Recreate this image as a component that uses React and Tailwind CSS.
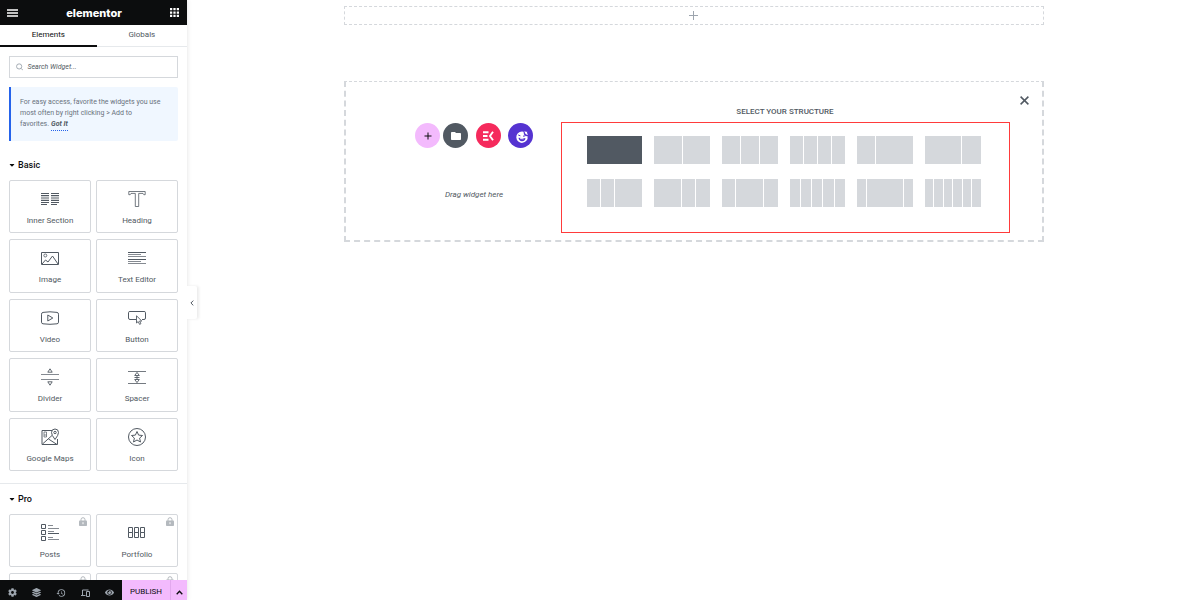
import { useState } from 'react';
import { FaCog, FaCaretDown, FaEye, FaLayerGroup } from 'react-icons/fa';
import { MdAdd, MdFolder, MdHistory } from 'react-icons/md';

const icons = {
  innerSection: (
    <>
      <path d="M0 3.5h8M10 3.5h8M0 5.5h8M10 5.5h8M0 10.5h8M10 10.5h8M0 12.5h8M10 12.5h8M0 14.5h6M10 14.5h6" />
      <path d="M0 8h8M10 8h8" strokeWidth="3" opacity=".5" />
    </>
  ),
  heading: <path d="M.8 1.500h16.400v3.200h-1.400L15 3.400h-4.300v13.100H7.300V3.400H3L2.200 4.700H.8z" strokeWidth=".8" />,
  image: (
    <>
      <path d="M.5 3.500h17v12H.5z" />
      <circle cx="4.300" cy="6.500" r="1.500" strokeWidth=".8" />
      <path d="M1 15l3.500-4 2.500 2 4.500-6 5.500 8" />
    </>
  ),
  textEditor: (
    <>
      <path d="M0 3.500h18M0 10.500h18" />
      <path d="M0 5.500h13M0 7.500h18M0 12.500h13M0 14.500h18" opacity=".7" />
    </>
  ),
  video: (
    <>
      <path d="M2 3.4Q9 2.2 16 3.4q1.5.2 1.5 1.8v8q0 1.4-1.5 1.6-7 1-14 0Q.5 14.6.5 13.2v-8Q.5 3.6 2 3.400z" />
      <path d="M6.800 6v6l5-3z" />
    </>
  ),
  button: (
    <>
      <path d="M8 10.5H2Q.5 10.5.5 9V3.500Q.5 2.500 2 2.500h14q1.500 0 1.500 1V9q0 1.500-1.500 1.500h-2" />
      <path d="M8.500 6.800V14l1.700-1.400 1.400 2.800 1.300-.7-1.300-2.700h2.200z" strokeWidth=".9" />
    </>
  ),
  divider: (
    <>
      <path d="M0 6.500h18M0 11.500h18" opacity=".7" />
      <path d="M9 .8l2.200 3.400H6.800zM9 17.200l2.200-3.400H6.800z" strokeWidth=".9" />
    </>
  ),
  spacer: (
    <>
      <path d="M0 3.500h18M0 15.500h18" opacity=".8" />
      <path d="M9 4.400l2.300 3.100H6.700zM9 14.600l2.300-3.100H6.700zM9 7.500v4M6.500 9.500h5" strokeWidth=".9" />
    </>
  ),
  maps: (
    <>
      <path d="M11 2.500H1v14h15.500V11M1.500 16L11 7.500M7.500 11l8.500 5.500" />
      <path d="M14 11.500q-3.500-4.500-3.500-7a3.500 3.500 0 0 1 7 0q0 2.500-3.500 7z" />
      <circle cx="14" cy="4.500" r="1.200" />
      <path d="M3 4h2.500v3H3zM3 7v2h2.500V7" strokeWidth=".7" />
    </>
  ),
  icon: (
    <>
      <circle cx="9" cy="9" r="8.500" />
      <path d="M9 3.500l1.600 3.600 3.900.4-2.900 2.600.9 3.900L9 12l-3.500 2 .9-3.900-2.900-2.600 3.900-.4z" />
    </>
  ),
  posts: (
    <>
      <path d="M.5 .5h4v4h-4zM.5 6.500h4v4h-4zM.5 12.500h4v4h-4zM7 9.500h11" />
      <path d="M7 1.500h5M7 4.500h11M7 7.500h6M7 13.500h5M7 15.500h11" opacity=".7" />
    </>
  ),
  portfolio: <path d="M.5 3.500h4v5h-4zM6.500 3.500h4v5h-4zM12.500 3.500h4v5h-4zM.5 8.500h4v5h-4zM6.500 8.500h4v5h-4zM12.500 8.500h4v5h-4z" />,
};

const basicWidgets = [
  { name: 'Inner Section', icon: 'innerSection' },
  { name: 'Heading', icon: 'heading' },
  { name: 'Image', icon: 'image' },
  { name: 'Text Editor', icon: 'textEditor' },
  { name: 'Video', icon: 'video' },
  { name: 'Button', icon: 'button' },
  { name: 'Divider', icon: 'divider' },
  { name: 'Spacer', icon: 'spacer' },
  { name: 'Google Maps', icon: 'maps' },
  { name: 'Icon', icon: 'icon' },
];

const proWidgets = [
  { name: 'Posts', icon: 'posts' },
  { name: 'Portfolio', icon: 'portfolio' },
];

const structures = [
  [100],
  [50, 50],
  [33, 33, 33],
  [25, 25, 25, 25],
  [33, 66],
  [66, 33],
  [25, 25, 50],
  [50, 25, 25],
  [25, 50, 25],
  [20, 20, 20, 20, 20],
  [16, 66, 16],
  [16, 16, 16, 16, 16, 16],
];

function LockIcon() {
  return (
    <svg viewBox="0 0 8 9" className="absolute top-[2px] right-[3px] h-[9px] w-[8px]" fill="none">
      <path d="M2 4V2.700a2 2 0 0 1 4 0V4" stroke="#b4b9be" />
      <rect y="3.500" width="8" height="5.500" rx=".8" fill="#b4b9be" />
      <path d="M4 5.200v2" stroke="#fff" />
    </svg>
  );
}

function WidgetCard({ name, icon, locked }) {
  return (
    <button className="relative flex min-h-[53px] flex-col items-center rounded-[2px] border border-[#d5d8dc] pt-[9px] text-[#515962]">
      {locked && <LockIcon />}
      {icon && (
        <svg viewBox="0 0 18 18" className="h-[18px] w-[18px]" fill="none" stroke="currentColor">
          {icons[icon]}
        </svg>
      )}
      <span className="mt-[7px] text-[8px] leading-[11px]">{name}</span>
    </button>
  );
}

function CategoryTitle({ children }) {
  return (
    <h2 className="flex items-center gap-[3px] text-[9px] leading-[12px] font-medium text-[#0c0d0e]">
      <FaCaretDown className="h-[8px] w-[6px]" />
      {children}
    </h2>
  );
}

function Sidebar() {
  const [tab, setTab] = useState('Elements');
  const [search, setSearch] = useState('');

  return (
    <aside className="relative z-10 flex w-[187px] shrink-0 flex-col bg-white shadow-[0_0_5px_rgba(0,0,0,0.12)]">
      <header className="flex h-[25px] shrink-0 items-center justify-between bg-[#0c0d0e] pr-[8px] pl-[7px] text-white">
        <button aria-label="Menu">
          <svg viewBox="0 0 11 8" className="h-[8px] w-[11px]" stroke="currentColor">
            <path d="M0 1h11M0 4h11M0 7h11" strokeWidth="1.400" />
          </svg>
        </button>
        <span className="font-['Inter',sans-serif] text-[11px] leading-[14px] font-extrabold">elementor</span>
        <button aria-label="Widgets">
          <svg viewBox="0 0 8 8" className="h-[9px] w-[9px]" fill="currentColor">
            <path d="M0 0h2v2H0zM3 0h2v2H3zM6 0h2v2H6zM0 3h2v2H0zM3 3h2v2H3zM6 3h2v2H6zM0 6h2v2H0zM3 6h2v2H3zM6 6h2v2H6z" />
          </svg>
        </button>
      </header>

      <nav className="flex h-[22px] shrink-0 border-b border-[#e6e9ec] text-[8px] text-[#515962]">
        {['Elements', 'Globals'].map((name) => (
          <button
            key={name}
            onClick={() => setTab(name)}
            className={`-mb-px grow border-b-2 pb-[1px] ${tab === name ? 'border-[#0c0d0e] text-[#0c0d0e]' : 'border-transparent'}`}
          >
            {name}
          </button>
        ))}
      </nav>

      <div className="min-h-0 flex-1 overflow-hidden">
        <div className="px-[9px] pt-[9px]">
          <label className="flex h-[22px] items-center gap-[4px] border border-[#d5d8dc] px-[6px] text-[#9da5ae]">
            <svg viewBox="0 0 8 8" className="h-[8px] w-[8px]" fill="none" stroke="currentColor">
              <circle cx="3.400" cy="3.400" r="2.800" />
              <path d="M5.400 5.400L7.700 7.700" />
            </svg>
            <input
              type="text"
              aria-label="Search Widget"
              placeholder="Search Widget..."
              value={search}
              onChange={(e) => setSearch(e.target.value)}
              className="w-full min-w-0 text-[7px] italic outline-none placeholder:text-[#515962]"
            />
          </label>

          <p className="mt-[9px] rounded-r-[2px] border-l-2 border-[#2563eb] bg-[#f0f7ff] pt-[10px] pr-[16px] pb-[10px] pl-[9px] text-[7px] leading-[11px] text-[#69727d]">
            For easy access, favorite the widgets you use most often by right clicking &gt; Add to favorites.
            <a href="#" className="ml-[2px] inline-block border-b border-dotted border-[#2563eb] font-bold text-[#515962] italic">Got It</a>
          </p>
        </div>

        <section className="px-[9px] pt-[18px] pb-[12px]">
          <CategoryTitle>Basic</CategoryTitle>
          <div className="mt-[9px] grid min-h-[291px] grid-cols-2 gap-x-[5px] gap-y-[6px]">
            {basicWidgets.map((w) => (
              <WidgetCard key={w.name} {...w} />
            ))}
          </div>
        </section>

        <section className="border-t border-[#e6e9ec] px-[9px] pt-[9px]">
          <CategoryTitle>Pro</CategoryTitle>
          <div className="mt-[9px] grid grid-cols-2 gap-x-[5px] gap-y-[6px]">
            {proWidgets.map((w) => (
              <WidgetCard key={w.name} {...w} locked />
            ))}
            <WidgetCard locked />
            <WidgetCard locked />
          </div>
        </section>
      </div>

      <footer className="flex h-[20px] shrink-0 bg-[#0c0d0e] text-[#9da5ae]">
        <div className="flex flex-1 items-center justify-around pt-[5px]">
          <button aria-label="Settings"><FaCog className="h-[9px] w-[9px]" /></button>
          <button aria-label="Navigator"><FaLayerGroup className="h-[9px] w-[9px]" /></button>
          <button aria-label="History"><MdHistory className="h-[10px] w-[10px]" /></button>
          <button aria-label="Responsive mode">
            <svg viewBox="0 0 9 8" className="h-[8px] w-[9px]" fill="none" stroke="currentColor">
              <path d="M7.500 1H1.500v5.500M0 6.500h4.500M5.500 2.500h3v5h-3z" />
            </svg>
          </button>
          <button aria-label="Preview"><FaEye className="h-[9px] w-[9px]" /></button>
        </div>
        <button className="w-[48px] bg-[#f3bafd] pt-[4px] text-[8px] leading-[16px] text-[#0c0d0e]">PUBLISH</button>
        <button aria-label="Save options" className="flex w-[17px] items-center justify-center border-l border-[#e2a8ee] bg-[#f3bafd] pt-[4px] text-[#0c0d0e]">
          <svg viewBox="0 0 7 5" className="h-[5px] w-[7px]" fill="none" stroke="currentColor">
            <path d="M.7 4.200L3.500 1.200l2.800 3" strokeWidth="1.300" />
          </svg>
        </button>
      </footer>

      <button
        aria-label="Hide panel"
        className="absolute top-[286px] left-full flex h-[33px] w-[10px] items-center justify-center rounded-r-[2px] bg-white text-[#515962] shadow-[2px_0_3px_rgba(0,0,0,0.08)]"
      >
        <svg viewBox="0 0 4 6" className="h-[6px] w-[4px]" fill="none" stroke="currentColor">
          <path d="M3.300.6L.9 3l2.400 2.400" />
        </svg>
      </button>
    </aside>
  );
}

function Structure({ columns, active }) {
  return (
    <button aria-label={columns.join(', ')} className="flex h-[28px] gap-px">
      {columns.map((size, i) => (
        <span key={i} style={{ flexGrow: size }} className={`h-full basis-0 ${active ? 'bg-[#515962]' : 'bg-[#d5d8dc]'}`} />
      ))}
    </button>
  );
}

function AddSection() {
  return (
    <div className="mt-[56px] flex border-2 border-t border-dashed border-[#d5d8dc] pb-[7px]">
      <div className="ml-[42px] flex w-[173px] shrink-0 flex-col items-center pt-[41px]">
        <div className="flex text-white">
          <button aria-label="Add new section" className="flex h-[25px] w-[25px] items-center justify-center rounded-full bg-[#f3bafd] text-[#0c0d0e]">
            <MdAdd className="h-[12px] w-[12px]" />
          </button>
          <button aria-label="Add template" className="ml-[3px] flex h-[25px] w-[25px] items-center justify-center rounded-full bg-[#515962]">
            <MdFolder className="h-[12px] w-[12px]" />
          </button>
          <button aria-label="Add kit" className="ml-[8px] flex h-[25px] w-[25px] items-center justify-center rounded-full bg-[#f52a5c]">
            <svg viewBox="0 0 11 10" className="h-[10px] w-[11px]" fill="none" stroke="currentColor" strokeWidth="1.900">
              <path d="M0 1.200h5.500M0 5h4.500M0 8.800h5.500M10 .8L7 5l3 4.200" />
            </svg>
          </button>
          <button aria-label="Add block" className="ml-[7px] flex h-[25px] w-[25px] items-center justify-center rounded-full bg-[#5533d1]">
            <svg viewBox="0 0 14 14" className="mt-[2px] ml-[3px] h-[14px] w-[14px]">
              <path d="M7 1.500a5.700 5.700 0 1 0 5.600 4.700Q10 6.500 9 4.500L8.500 1.700Q7.700 1.500 7 1.500z" fill="#fff" />
              <path d="M9.600 .8l1.400 1.200 1.200-.4-.2 1.400 1 1.800q-3.200.4-3.400-4z" fill="#fff" />
              <path d="M3.500 7.800l7 .4q-.5 3-3.500 3T3.500 7.800z" fill="#5533d1" />
              <path d="M5.200 8.600l3.400.2" stroke="#fff" />
              <path d="M3.200 5l2.200.8M8 6.200l2.400-.4" stroke="#5533d1" />
            </svg>
          </button>
        </div>
        <p className="mt-[41px] text-[8px] leading-[12px] text-[#515962] italic">Drag widget here</p>
      </div>

      <div className="flex-1 pt-[24px]">
        <h2 className="text-center text-[8px] leading-[12px] font-medium text-[#515962]">SELECT YOUR STRUCTURE</h2>
        <div className="mt-[4px] grid grid-cols-6 gap-x-[12px] gap-y-[15px] border border-[#ff3b3b] pt-[13px] pr-[28px] pb-[25px] pl-[25px]">
          {structures.map((columns, i) => (
            <Structure key={i} columns={columns} active={i === 0} />
          ))}
        </div>
      </div>

      <div className="flex w-[32px] shrink-0 justify-start self-start pt-[14px] pl-[10px]">
        <button aria-label="Close" className="text-[#515962]">
          <svg viewBox="0 0 9 9" className="h-[9px] w-[9px]" stroke="currentColor" strokeWidth="1.500">
            <path d="M.6.6l7.800 7.800M8.400.6L.6 8.400" />
          </svg>
        </button>
      </div>
    </div>
  );
}

export default function App() {
  return (
    <div className="flex h-screen overflow-hidden bg-white font-['Roboto',sans-serif]">
      <Sidebar />
      <main className="flex-1 px-4 pt-[6px]">
        <div className="mx-auto w-full max-w-[700px]">
          <button aria-label="Add" className="flex h-[19px] w-full items-center justify-center border border-dashed border-[#d5d8dc] text-[#9da5ae]">
            <svg viewBox="0 0 9 9" className="h-[9px] w-[9px]" stroke="currentColor">
              <path d="M4.500 0v9M0 4.500h9" />
            </svg>
          </button>
          <AddSection />
        </div>
      </main>
    </div>
  );
}
